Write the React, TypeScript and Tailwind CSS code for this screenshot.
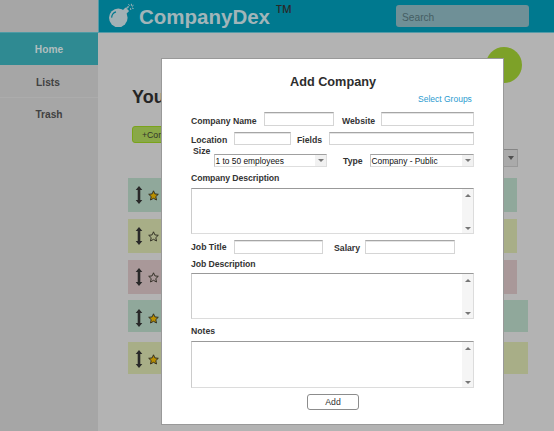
import React from "react";

function Bomb() {
  return (
    <svg className="mt-[3px] ml-[9px] h-[26px] w-[26px] shrink-0" viewBox="0 0 26 26">
      <circle cx="10.3" cy="14.8" r="9.3" fill="#a2b1b5" />
      <path d="M14.5 7.5l3-3 3.6 3.6-3 3z" fill="#a2b1b5" />
      <path d="M18.8 6.2Q18.5 3.5 21 4" fill="none" stroke="#a2b1b5" strokeWidth="1.2" />
      <path d="M20.5 1.2l1 1.5M23.4.8v2M25.5 2.2l-1.6 1.3M24 5l1.6.6M22.5 5.2l.3 1.8" stroke="#9fb3b7" strokeWidth="1" />
      <path d="M3.6 14.6Q4 9.8 8 8.8" fill="none" stroke="#00798f" strokeWidth="1.2" />
    </svg>
  );
}

function Row({ className, starred }: { className: string; starred: boolean }) {
  return (
    <div className={`flex shrink-0 items-center ${className}`}>
      <svg className="ml-[7px] h-[18px] w-[8px]" viewBox="0 0 8 18">
        <path d="M4 0L7.3 4H5.3v10h2L4 18 .7 14h2V4h-2z" fill="#292929" />
      </svg>
      <svg className="mt-px ml-[5px] h-[11px] w-[11px]" viewBox="0 0 11 11">
        <path
          d="M5.5.8l1.4 3.1 3.4.4-2.5 2.3.7 3.4-3-1.7-3 1.7.7-3.4L.7 4.3l3.4-.4z"
          fill={starred ? "#b98f00" : "none"}
          stroke="#29271d"
          strokeWidth=".9"
        />
      </svg>
    </div>
  );
}

function Label({ className, children }: { className: string; children: React.ReactNode }) {
  return (
    <div className={`shrink-0 text-[8.7px] leading-[12px] font-bold whitespace-nowrap text-[#333] ${className}`}>
      {children}
    </div>
  );
}

function Field({ className }: { className: string }) {
  return (
    <div
      className={`shrink-0 border border-[#d5d5d5] border-t-[#a6a6a6] bg-white shadow-[inset_0_1px_0_#e4e4e4] ${className}`}
    />
  );
}

function Choice({ className, children }: { className: string; children: React.ReactNode }) {
  return (
    <div
      className={`flex h-[13px] shrink-0 border border-[#dedede] border-t-[#a0a0a0] border-l-[#c4c4c4] bg-white ${className}`}
    >
      <span className="w-0 grow pl-[0.5px] text-[8.4px] leading-[13px] whitespace-nowrap text-[#111]">{children}</span>
      <span className="flex w-[11px] items-center justify-center bg-[#f1f1f1]">
        <svg className="h-[3px] w-[6px]" viewBox="0 0 6 3">
          <path d="M0 0h6L3 3z" fill="#777" />
        </svg>
      </span>
    </div>
  );
}

function TextArea({ className }: { className: string }) {
  return (
    <div
      className={`flex w-[283px] justify-end border border-[#dcdcdc] border-t-[#999] border-l-[#ccc] bg-white ${className}`}
    >
      <div className="flex w-[11px] flex-col items-center justify-between bg-[#f5f5f5] pt-[5px] pb-[3px]">
        <svg className="h-[3px] w-[6px]" viewBox="0 0 6 3">
          <path d="M0 3h6L3 0z" fill="#777" />
        </svg>
        <svg className="h-[3px] w-[6px]" viewBox="0 0 6 3">
          <path d="M0 0h6L3 3z" fill="#777" />
        </svg>
      </div>
    </div>
  );
}

function Modal() {
  return (
    <div className="absolute top-[58px] left-[161px] flex h-[367px] w-[343px] flex-col border border-[#999] bg-white pl-[29px]">
      <div className="mt-[14px] h-[18px] pl-[99px] text-[12.7px] leading-[18px] font-bold whitespace-nowrap text-[#2d2d2d]">
        Add Company
      </div>
      <div className="mt-[2px] h-[12px] pl-[227px] text-[8.5px] leading-[12px] whitespace-nowrap text-[#2b9bd0]">
        Select Groups
      </div>
      <div className="mt-[7px] flex h-[20px]">
        <Label className="mt-[3px] w-[73px]">Company Name</Label>
        <Field className="h-[14px] w-[70px]" />
        <Label className="mt-[3px] ml-[8px] w-[39px]">Website</Label>
        <Field className="h-[14px] w-[93px]" />
      </div>
      <div className="flex h-[13px]">
        <Label className="mt-[2px] w-[43px]">Location</Label>
        <Field className="h-[13px] w-[57px]" />
        <Label className="mt-[2px] ml-[6px] w-[32px]">Fields</Label>
        <Field className="h-[13px] w-[145px]" />
      </div>
      <div className="flex h-[22px]">
        <Label className="ml-[2px] w-[21px]">Size</Label>
        <Choice className="mt-[9px] w-[113px]">1 to 50 employees</Choice>
        <Label className="mt-[10px] ml-[16px] w-[27px]">Type</Label>
        <Choice className="mt-[9px] w-[104px]">Company - Public</Choice>
      </div>
      <Label className="mt-[5px] h-[12px] tracking-[-0.08px]">Company Description</Label>
      <TextArea className="mt-[4px] h-[46px]" />
      <div className="mt-[6px] flex h-[14px]">
        <Label className="mt-px w-[43px]">Job Title</Label>
        <Field className="h-[14px] w-[89px]" />
        <Label className="mt-[2px] ml-[11px] w-[31px]">Salary</Label>
        <Field className="h-[14px] w-[90px]" />
      </div>
      <Label className="mt-[4px] h-[12px] tracking-[-0.08px]">Job Description</Label>
      <TextArea className="mt-[3px] h-[46px]" />
      <Label className="mt-[6px] h-[12px]">Notes</Label>
      <TextArea className="mt-[4px] h-[47px]" />
      <button className="mt-[6px] ml-[116px] h-[16px] w-[52px] rounded-[3px] border border-[#8c8c8c] bg-white text-[8.7px] leading-[14px] text-[#333]">
        Add
      </button>
    </div>
  );
}

export default function App() {
  return (
    <div className="relative flex h-[431px] w-[554px] overflow-hidden bg-[#b3b3b3] font-['Liberation_Sans',Arial,sans-serif]">
      <aside className="flex h-full w-[98px] shrink-0 flex-col bg-[#a6a6a6] text-center text-[10.2px] font-bold text-[#414141]">
        <div className="h-[32px]" />
        <div className="h-[33px] border-t border-[#4e9ba5] bg-[#2f8a92] leading-[33px] text-[#b1bebf]">Home</div>
        <div className="h-[33px] border-b border-[#acacac] pr-[2px] leading-[36px]">Lists</div>
        <div className="h-[32px] leading-[34px]">Trash</div>
      </aside>
      <div className="flex w-[456px] flex-col">
        <header className="flex h-[33px] shrink-0 border-b border-l border-[#559ba8] bg-[#00798f]">
          <Bomb />
          <div className="ml-[5px] w-[137px] text-[20.5px] leading-[33px] font-bold text-[#a2b5b9]">CompanyDex</div>
          <div className="mt-[3px] w-[120px] font-['Open_Sans',sans-serif] text-[10.5px] leading-[12px] font-semibold text-[#292929]">
            TM
          </div>
          <div className="mt-[5px] h-[22px] w-[133px] rounded-[3px] bg-[#6f9097] pl-[6px] text-[10.2px] leading-[25px] text-[#455e63]">
            Search
          </div>
        </header>
        <main className="flex flex-col">
          <div className="flex h-[52px] justify-end pt-[14px] pr-[32px]">
            <div className="h-[36px] w-[36px] shrink-0 rounded-full bg-[#7da128]" />
          </div>
          <h1 className="h-[24px] pl-[34px] text-[18px] leading-[24px] font-bold text-[#252525]">Your Companies</h1>
          <div className="mt-[17px] ml-[34px] h-[17px] w-[60px] rounded-[3px] border border-[#7aa31b] bg-[#89a848] pl-[9px] text-[8.7px] leading-[16px] whitespace-nowrap text-[#323529]">
            +Company
          </div>
          <div className="mt-[6px] ml-[360px] flex h-[18px] w-[60px] items-center justify-end border border-[#999] border-t-[#858585] bg-[#aaa] pr-[3px]">
            <svg className="h-[4px] w-[6px]" viewBox="0 0 6 4">
              <path d="M0 0h6L3 4z" fill="#505050" />
            </svg>
          </div>
          <div className="mt-[11px] flex flex-col pl-[30px]">
            <Row starred className="h-[34px] w-[389px] bg-[#90a89b]" />
            <Row starred={false} className="mt-[7px] h-[34px] w-[389px] bg-[#a8ae87]" />
            <Row starred={false} className="mt-[7px] h-[34px] w-[389px] bg-[#a99899]" />
            <Row starred className="mt-[6px] h-[32px] w-[400px] bg-[#90a89b] pt-[3px]" />
            <Row starred className="mt-[10px] h-[32px] w-[400px] bg-[#a8ae87] pt-px" />
          </div>
        </main>
      </div>
      <Modal />
    </div>
  );
}
